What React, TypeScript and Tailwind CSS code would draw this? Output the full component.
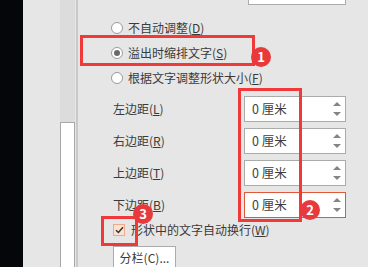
import React from 'react';

const font = { fontFamily: '"Microsoft YaHei", "Noto Sans CJK SC", sans-serif' };

function Radio({ checked, label, hot }: { checked?: boolean; label: string; hot: string }) {
  return (
    <div className="flex items-center h-[25px]">
      <span className="w-[12px] h-[12px] rounded-full border border-[#9a9a9a] bg-white flex items-center justify-center">
        {checked && <span className="w-[6px] h-[6px] rounded-full bg-[#6a6a6a]" />}
      </span>
      <span className="ml-[5px] text-[12px] text-[#3a3a3a]">
        {label}(<u>{hot}</u>)
      </span>
    </div>
  );
}

function SpinRow({ label, hot, focused }: { label: string; hot: string; focused?: boolean }) {
  return (
    <div className="flex items-center h-[26px] mb-[6px]">
      <span className="w-[131px] text-[12px] text-[#3a3a3a]">
        {label}(<u>{hot}</u>)
      </span>
      <div
        className={
          focused
            ? 'w-[102px] h-[26px] bg-white border border-[#e0573a] flex items-center justify-between pl-[7px] pr-[4px]'
            : 'w-[102px] h-[26px] bg-white border border-[#ababab] flex items-center justify-between pl-[7px] pr-[4px]'
        }
      >
        <span className="text-[12.5px] text-[#404040]">0 厘米</span>
        <span className="flex flex-col gap-[6px]">
          <svg width="8" height="4" viewBox="0 0 8 4"><path d="M0 4 L4 0 L8 4 Z" fill="#858585" /></svg>
          <svg width="8" height="4" viewBox="0 0 8 4"><path d="M0 0 L8 0 L4 4 Z" fill="#858585" /></svg>
        </span>
      </div>
    </div>
  );
}

function Badge({ n, className }: { n: string; className: string }) {
  return (
    <span
      className={
        'absolute w-[20px] h-[20px] rounded-full bg-[#e83a3d] text-white text-[13px] font-bold flex items-center justify-center ' +
        className
      }
    >
      {n}
    </span>
  );
}

export default function App() {
  return (
    <div className="flex w-[368px] h-[267px] overflow-hidden bg-[#e6e6e6]" style={font}>
      <div className="w-[23px] bg-[#05060a]" />
      <div className="w-[37px] bg-[#e6e6e6]" />
      <div className="w-[15px] bg-[#dcdcdc] flex flex-col">
        <div className="h-[122px]" />
        <div className="flex-1 bg-white border border-[#a8a8a8] border-b-0" />
      </div>
      <div className="w-[1px] bg-[#e6e6e6]" />
      <div className="w-[2px] bg-[#c9c9c9]" />
      <div className="relative flex-1">
        <div className="ml-[170px] w-[98px] h-[5px] bg-white border border-t-0 border-[#ababab]" />
        <div className="pl-[33px] pt-[10px]">
          <Radio label="不自动调整" hot="D" />
          <Radio label="溢出时缩排文字" hot="S" checked />
          <Radio label="根据文字调整形状大小" hot="F" />
        </div>
        <div className="pl-[35px] mt-[6px]">
          <SpinRow label="左边距" hot="L" />
          <SpinRow label="右边距" hot="R" />
          <SpinRow label="上边距" hot="T" />
          <SpinRow label="下边距" hot="B" focused />
        </div>
        <div className="pl-[35px] flex items-center h-[12px] mt-[3px]">
          <span className="w-[12px] h-[12px] border border-[#f0a888] bg-[#fde2d4] flex items-center justify-center">
            <svg width="9" height="8" viewBox="0 0 9 8">
              <path d="M1 4.2 L3.4 6.5 L8 1.2" fill="none" stroke="#333" strokeWidth="1.5" />
            </svg>
          </span>
          <span className="ml-[6px] text-[12px] text-[#3a3a3a]">
            形状中的文字自动换行(<u>W</u>)
          </span>
        </div>
        <div className="ml-[35px] mt-[10px] w-[63px] h-[24px] bg-white border border-[#ababab] flex items-center justify-center">
          <span className="text-[12px] text-[#3a3a3a]">分栏(C)...</span>
        </div>

        <div className="absolute left-[2px] top-[35px] w-[175px] h-[31px] border-[3px] border-[#f03a3a]" />
        <Badge n="1" className="left-[173px] top-[47px]" />
        <div className="absolute left-[160px] top-[88px] w-[64px] h-[134px] border-[3px] border-[#f03a3a]" />
        <Badge n="2" className="left-[222px] top-[200px]" />
        <div className="absolute left-[23px] top-[216px] w-[37px] h-[30px] border-[3px] border-[#f03a3a]" />
        <Badge n="3" className="left-[55px] top-[204px]" />
      </div>
    </div>
  );
}
